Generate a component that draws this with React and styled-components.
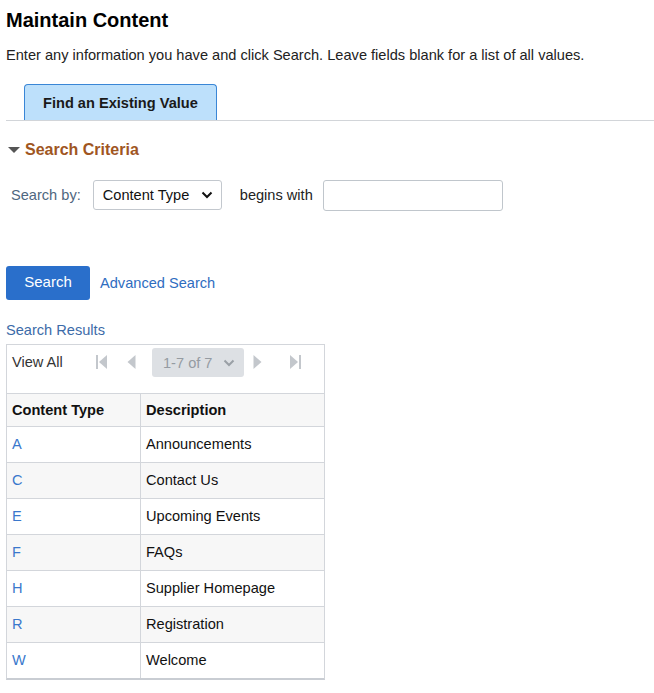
import React from 'react';
import styled, { createGlobalStyle } from 'styled-components';

const GlobalStyle = createGlobalStyle`
  body {
    margin: 0;
    background: #fff;
    font-family: "Liberation Sans", Arial, sans-serif;
    font-size: 14.6px;
    color: #000;
  }
`;

const Page = styled.div`
  padding: 8px 0 0 6px;
`;

const Title = styled.h1`
  margin: 0;
  font-size: 20px;
  line-height: 24px;
  font-weight: bold;
`;

const Instructions = styled.p`
  margin: 13px 0 0;
  line-height: 20px;
  color: #222;
`;

const TabStrip = styled.div`
  display: flex;
  margin-top: 19px;
  border-bottom: 1px solid #d2d5d9;
`;

const Tab = styled.div`
  margin-left: 18px;
  height: 36px;
  box-sizing: border-box;
  padding: 0 18px;
  display: flex;
  align-items: center;
  background: #bde0fb;
  border: 1px solid #3a86d6;
  border-bottom: none;
  border-radius: 4px 4px 0 0;
  font-weight: bold;
  color: #1a1a1a;
`;

const SectionHeader = styled.div`
  display: flex;
  align-items: center;
  gap: 5px;
  margin-top: 19px;
  padding-left: 2px;
  font-size: 16px;
  line-height: 20px;
  font-weight: bold;
  color: #a0561f;
`;

const Caret = styled.span`
  width: 0;
  height: 0;
  border-left: 6px solid transparent;
  border-right: 6px solid transparent;
  border-top: 6px solid #555;
`;

const SearchRow = styled.div`
  display: flex;
  align-items: center;
  margin-top: 19px;
  padding-left: 5px;
`;

const FieldLabel = styled.span`
  color: ${(p) => p.$muted ? '#4f6780' : '#222'};
  margin-right: ${(p) => p.$gap}px;
`;

const SelectBox = styled.div`
  width: 129px;
  height: 30px;
  box-sizing: border-box;
  display: flex;
  align-items: center;
  justify-content: space-between;
  padding: 0 7px 0 9px;
  border: 1px solid #c3c8ce;
  border-radius: 3px;
  margin-right: 18px;
  color: #111;
`;

const TextInput = styled.input`
  width: 180px;
  height: 31px;
  box-sizing: border-box;
  margin: 1px 0 0;
  border: 1px solid #c0c6cc;
  border-radius: 3px;
  font: inherit;
`;

const ActionRow = styled.div`
  display: flex;
  align-items: center;
  gap: 10px;
  margin-top: 55px;
`;

const PrimaryButton = styled.button`
  width: 84px;
  height: 34px;
  border: none;
  border-radius: 3px;
  background: #2a6fcb;
  color: #fff;
  font-family: inherit;
  font-size: 15px;
  padding: 0 0 3px;
`;

const TextLink = styled.a`
  color: #2f6dbf;
  text-decoration: none;
`;

const ResultsLabel = styled.div`
  margin-top: 20px;
  margin-bottom: 4px;
  line-height: 20px;
  color: #3c6ba8;
`;

const Grid = styled.div`
  width: 319px;
  box-sizing: border-box;
  border: 1px solid #d3d6db;
  border-bottom: 2px solid #c9cdd3;
`;

const NavBar = styled.div`
  height: 48px;
  box-sizing: border-box;
  padding: 3px 0 0 5px;
  display: flex;
  align-items: flex-start;
  color: #333;
`;

const NavLabel = styled.span`
  width: 84px;
  height: 29px;
  line-height: 29px;
`;

const NavIcon = styled.svg`
  margin: 7px 0 0 ${(p) => p.$gap}px;
  flex: none;
`;

const PageSelect = styled.div`
  margin-left: 16px;
  width: 92px;
  height: 29px;
  box-sizing: border-box;
  display: flex;
  align-items: center;
  justify-content: space-between;
  padding: 0 8px 0 11px;
  background: #dde0e4;
  border-radius: 3px;
  color: #959ba2;
`;

const Row = styled.div`
  display: grid;
  grid-template-columns: 133px 1fr;
  height: ${(p) => p.$head ? 32 : 35}px;
  border-top: 1px solid #d3d6db;
  background: ${(p) => p.$shade ? '#f7f7f7' : '#fff'};
  font-weight: ${(p) => p.$head ? 'bold' : 'normal'};
`;

const Cell = styled.div`
  display: flex;
  align-items: center;
  padding: 0 0 ${(p) => p.$lift || 0}px 5px;
  color: ${(p) => p.$link ? '#3a78cc' : '#111'};
  & + & {
    border-left: 1px solid #d3d6db;
  }
`;

const Chevron = ({ color = '#111', size = 14 }) => (
  <svg width={size} height={size} viewBox="0 0 14 14">
    <path d="M2.5 4.5 L7 9 L11.5 4.5" fill="none" stroke={color} strokeWidth="2" />
  </svg>
);

const rows = [
  ['A', 'Announcements'],
  ['C', 'Contact Us'],
  ['E', 'Upcoming Events'],
  ['F', 'FAQs'],
  ['H', 'Supplier Homepage'],
  ['R', 'Registration'],
  ['W', 'Welcome'],
];

const iconGrey = '#c3c7cc';

export default function App() {
  return (
    <Page>
      <GlobalStyle />
      <Title>Maintain Content</Title>
      <Instructions>
        Enter any information you have and click Search. Leave fields blank for a list of all values.
      </Instructions>

      <TabStrip>
        <Tab>Find an Existing Value</Tab>
      </TabStrip>

      <SectionHeader>
        <Caret />
        Search Criteria
      </SectionHeader>

      <SearchRow>
        <FieldLabel $muted $gap={12}>Search by:</FieldLabel>
        <SelectBox>
          Content Type
          <Chevron />
        </SelectBox>
        <FieldLabel $gap={10}>begins with</FieldLabel>
        <TextInput />
      </SearchRow>

      <ActionRow>
        <PrimaryButton>Search</PrimaryButton>
        <TextLink>Advanced Search</TextLink>
      </ActionRow>

      <ResultsLabel>Search Results</ResultsLabel>

      <Grid>
        <NavBar>
          <NavLabel>View All</NavLabel>
          <NavIcon $gap={0} width="12" height="14" viewBox="0 0 12 14">
            <rect x="0" y="0" width="2" height="14" fill={iconGrey} />
            <path d="M11 0 L3 7 L11 14 Z" fill={iconGrey} />
          </NavIcon>
          <NavIcon $gap={19} width="9" height="14" viewBox="0 0 9 14">
            <path d="M8.5 0 L0.5 7 L8.5 14 Z" fill={iconGrey} />
          </NavIcon>
          <PageSelect>
            1-7 of 7
            <Chevron color="#9aa0a6" />
          </PageSelect>
          <NavIcon $gap={9} width="9" height="14" viewBox="0 0 9 14">
            <path d="M0.5 0 L8.5 7 L0.5 14 Z" fill={iconGrey} />
          </NavIcon>
          <NavIcon $gap={27} width="12" height="14" viewBox="0 0 12 14">
            <path d="M1 0 L9 7 L1 14 Z" fill={iconGrey} />
            <rect x="10" y="0" width="2" height="14" fill={iconGrey} />
          </NavIcon>
        </NavBar>
        <Row $head $shade>
          <Cell>Content Type</Cell>
          <Cell>Description</Cell>
        </Row>
        {rows.map(([code, desc], i) => (
          <Row key={code} $shade={i % 2 === 1}>
            <Cell $link $lift={2}>{code}</Cell>
            <Cell $lift={2}>{desc}</Cell>
          </Row>
        ))}
      </Grid>
    </Page>
  );
}
